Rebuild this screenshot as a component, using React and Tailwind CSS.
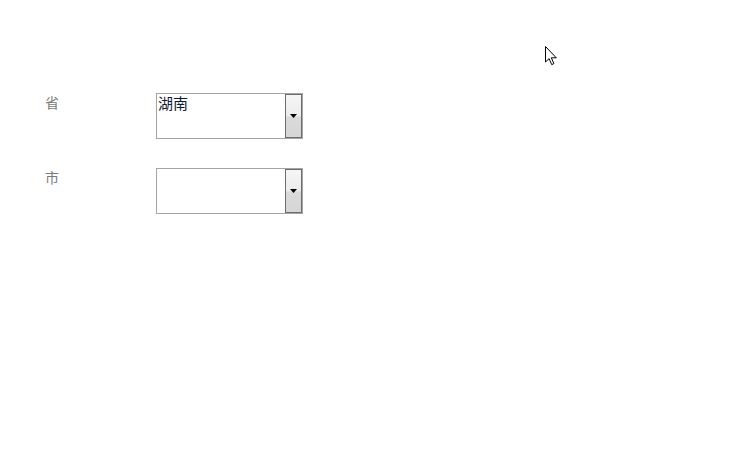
import React from 'react';

const font = { fontFamily: '"Noto Sans CJK SC", "Noto Sans", sans-serif' };

function Dropdown({ value }) {
  return (
    <div className="flex h-[46px] w-[147px] border border-[#a5a5a5] bg-white">
      <div className="flex-1 pl-[1px] text-[15px] leading-[18px] text-[#0d1a33]">{value}</div>
      <div className="flex w-[17px] items-center justify-center border border-[#6c6c6c] bg-[linear-gradient(#f6f6f6_0%,#ececec_50%,#dadada_52%,#d6d6d6_100%)]">
        <svg width="7" height="4" viewBox="0 0 7 4">
          <path d="M0 0h7L3.5 4z" fill="#000" />
        </svg>
      </div>
    </div>
  );
}

function Row({ label, value }) {
  return (
    <div className="flex items-start">
      <div className="w-[111px] text-[14px] leading-[18px] text-[#7a7a7a]">{label}</div>
      <Dropdown value={value} />
    </div>
  );
}

export default function App() {
  return (
    <div className="relative h-[468px] w-[729px] bg-white" style={font}>
      <div className="flex flex-col gap-[29px] pl-[45px] pt-[93px]">
        <Row label="省" value="湖南" />
        <Row label="市" value="" />
      </div>
      {/* mouse pointer */}
      <svg className="absolute left-[545px] top-[46px]" width="13" height="20" viewBox="0 0 13 20">
        <path d="M0.5 0.5v15.5l3.6-3.4 2.6 6 2.2-1-2.6-5.8h5z" fill="#fff" stroke="#000" strokeWidth="1" strokeLinejoin="miter" />
      </svg>
    </div>
  );
}
